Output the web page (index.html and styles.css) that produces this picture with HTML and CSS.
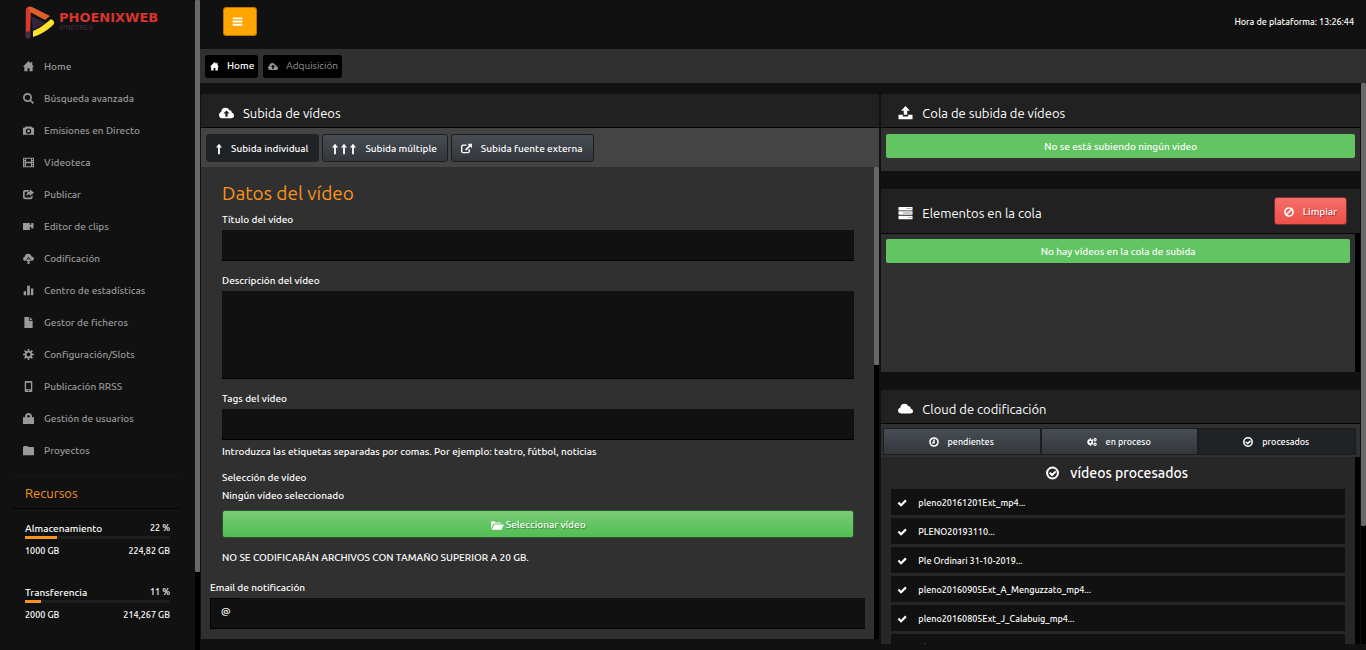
FILE: index.html
```html
<!DOCTYPE html>
<html lang="es">
<head>
<meta charset="utf-8">
<title>PhoenixWeb - Adquisición</title>
<link rel="stylesheet" href="styles.css">
</head>
<body>
<svg class="sprite" aria-hidden="true">
  <symbol id="home" viewBox="0 0 16 16"><path d="M8 0 0 8.500h2V15h4.500v-4.500h3V15H14V8.500h2l-2.500-2.700V1.500h-2v2.200z"/></symbol>
  <symbol id="search" viewBox="0 0 16 16"><circle cx="6.500" cy="6.500" r="5.300" fill="none" stroke="currentColor" stroke-width="2.400"/><path d="m9.500 11 1.600-1.600 4.900 4.900-1.700 1.700z"/></symbol>
  <symbol id="camera" viewBox="0 0 16 16"><path fill-rule="evenodd" d="M0 4h2l2-2h8l2 2h2v10H0zM8 5a4 4 0 1 0 0 8 4 4 0 0 0 0-8zm0 2a2 2 0 1 1 0 4 2 2 0 0 1 0-4z"/></symbol>
  <symbol id="film" viewBox="0 0 16 16"><path fill-rule="evenodd" d="M0 1h16v14H0zm1.500 1.500v2h1.500v-2zm0 3.500v1.500H3V6zm0 3v1.500H3V9zm0 3v1.500H3V12zM13 2.500v2h1.500v-2zM13 6v1.500h1.500V6zm0 3v1.500h1.500V9zm0 3v1.500h1.500V12zM4.500 2.500V7h7V2.500zm0 6.500v4.500h7V9z"/></symbol>
  <symbol id="share" viewBox="0 0 16 16"><path d="M9 1.500H3Q0 1.500 0 4.500V12q0 3 3 3h8q3 0 3-3v-2.500L11.500 11v.5q0 1-1 1H3.500q-1 0-1-1V5q0-1 1-1h4zM10 .5 16 5.500l-6 4.700V7.500Q6.500 7.500 5 10q0-6.500 5-6.500z"/></symbol>
  <symbol id="video" viewBox="0 0 16 16"><path d="M0 3h10v3l2-1V3h3q1 3 0 8h-3V9l-2-1v5H0z"/></symbol>
  <symbol id="codify" viewBox="0 0 16 16"><path d="M3 11.500Q0 11 0 8.500 0 6 2.500 5.500 3 1 7.500 1q4 0 5 4Q16 5.500 16 8.500q0 3-3.500 3L8 5.500 3.500 11.500z"/><path d="m8 7.500 3.800 4H9.500V16h-3v-4.500H4.200z"/></symbol>
  <symbol id="stats" viewBox="0 0 16 16"><path d="M1 9h3.500v6H1zM6 1h4v14H6zM11.500 5H15v10h-3.500z"/></symbol>
  <symbol id="file" viewBox="0 0 16 16"><path d="M2 0h6.500v5.500H14V16H2zM9.800 0 14 4.200H9.800z"/></symbol>
  <symbol id="cog" viewBox="0 0 16 16"><circle cx="8" cy="8" r="4.200" fill="none" stroke="currentColor" stroke-width="2.800"/><path d="M6.800 0h2.400v3H6.800zM6.800 13h2.400v3H6.800zM0 6.800h3v2.400H0zM13 6.800h3v2.400h-3zM1.500 3.200l1.700-1.700 2.100 2.100-1.700 1.700zM10.700 12.400l1.700-1.700 2.100 2.100-1.700 1.700zM12.800 1.500l1.700 1.700-2.100 2.100-1.700-1.700zM3.600 10.700l1.700 1.700-2.100 2.100-1.700-1.700z"/></symbol>
  <symbol id="phone" viewBox="0 0 16 16"><path fill-rule="evenodd" d="M4 0h8q1.500 0 1.500 1.500v13Q13.500 16 12 16H4q-1.500 0-1.500-1.500v-13Q2.500 0 4 0zm.5 2.500v9.500h7V2.500zM7 13.200v1.300h2v-1.300z"/></symbol>
  <symbol id="lock" viewBox="0 0 16 16"><path fill-rule="evenodd" d="M0 6h3V4Q4 0 8 0t5 4v2h3v10H0zm6 0h4V4.500Q9.500 3 8 3T6 4.500z"/></symbol>
  <symbol id="folder" viewBox="0 0 16 16"><path d="M0 3 1.500 1.500h5L8 3h8v12H0z"/></symbol>
  <symbol id="cloudup" viewBox="0 0 20 16"><path fill-rule="evenodd" d="M5 15q-5 0-5-4.500Q0 7.500 3 6.300 3.500 1 8.500 1q4 0 5.300 3.300Q17 4 17 7.300q3 .8 3 4Q20 15 16 15zM10 4.500 5.800 8.800h2.700V13h3V8.800h2.700z"/></symbol>
  <symbol id="cloud" viewBox="0 0 20 16"><path d="M5 14q-5 0-5-4Q0 7 3 6.300 3.500 1 8.500 1q4 0 5.300 3.300Q17 4 17 7.300q3 .8 3 3.700 0 3-4 3z"/></symbol>
  <symbol id="up" viewBox="0 0 8 16"><path d="M4 1 8 6H5.200v9H2.800V6H0z"/></symbol>
  <symbol id="external" viewBox="0 0 16 16"><path d="M8 2H3Q0 2 0 5v7q0 3 3 3h7q3 0 3-3V9h-2v3q0 1-1 1H3q-1 0-1-1V5q0-1 1-1h5zM9.500 1H16v6.500l-2.300-2.300-6.200 6-1.700-1.700 6-6.200z"/></symbol>
  <symbol id="upload" viewBox="0 0 16 16"><path d="m8 0 5 5.500h-3V10H6V5.500H3zM0 10h5v2h6v-2h5v5H0z"/></symbol>
  <symbol id="tasks" viewBox="0 0 16 16"><path d="M0 1h16v4H0zm0 5h16v4H0zm0 5h16v4H0z"/><path d="M9 2.500h6v1H9zM5 7.500h10v1H5zM11 12.500h4v1h-4z" fill="#999"/></symbol>
  <symbol id="ban" viewBox="0 0 16 16"><path d="m4 12 8-8M8 1.500a6.500 6.500 0 1 1 0 13 6.500 6.500 0 0 1 0-13z" fill="none" stroke="currentColor" stroke-width="2.600"/></symbol>
  <symbol id="clock" viewBox="0 0 16 16"><path d="M8 4v5H5M8 1.500a6.500 6.500 0 1 1 0 13 6.500 6.500 0 0 1 0-13z" fill="none" stroke="currentColor" stroke-width="2.400"/></symbol>
  <symbol id="okcircle" viewBox="0 0 16 16"><path d="m4.500 7.500 3 3L12 6M8 1.300a6.700 6.700 0 1 1 0 13.400A6.700 6.700 0 0 1 8 1.300z" fill="none" stroke="currentColor" stroke-width="2.500"/></symbol>
  <symbol id="cogs" viewBox="0 0 18 16"><circle cx="6" cy="8" r="3.600" fill="none" stroke="currentColor" stroke-width="3"/><path d="M5 1h2v3H5zM5 12h2v3H5zM-1 7h3v2h-3zM1 4.500 2.500 3l2 2L3 6.500zM2.500 13 1 11.500l2-2L4.500 11zM9.500 13 11 11.500l-2-2L7.500 11zM11 4.500 9.500 3l-2 2L9 6.500z"/><circle cx="14.500" cy="4" r="2" fill="none" stroke="currentColor" stroke-width="2"/><circle cx="14.500" cy="12" r="2" fill="none" stroke="currentColor" stroke-width="2"/></symbol>
  <symbol id="check" viewBox="0 0 16 16"><path d="m1 8.500 2.500-2.500L6.500 9 13 2.500 15.500 5l-9 9z"/></symbol>
  <symbol id="open" viewBox="0 0 20 16"><path d="M0 13V3q0-1.500 1.500-1.500h4L7 3.500h7.500Q16 3.500 16 5H5.500Q4 5 3.200 6.500zM5 6.500h15l-4 8H1z"/></symbol>
  <symbol id="bars" viewBox="0 0 16 16"><path d="M1 2h14v2.600H1zM1 6.700h14v2.600H1zM1 11.400h14V14H1z"/></symbol>
</svg>
<div class="app">
  <aside class="sidebar">
    <div class="sidebar-body">
      <a class="logo" href="#" aria-label="PhoenixWeb">
        <svg class="logo-mark" viewBox="0 0 30 33">
          <path d="M6 10 21 17 8 24z" fill="#33243b"/>
          <path d="M3 4v26" stroke="#4a2c49" stroke-width="5" stroke-linecap="round"/>
          <path d="M1 4Q1 1 4 1L6 3 5 25 1 26z" fill="#d9382b"/>
          <path d="M3 1q2-1 4 0l18 9-5 4L5 6z" fill="#dd5f2b"/>
          <path d="M26 13q6 3 1 7Q18 28 8 31V25q8-3 18-12z" fill="#fbe32d"/>
        </svg>
        <span class="logo-words"><span class="logo-name">PHOENIXWEB</span><span class="logo-sub">IPNETRES</span></span>
      </a>
      <nav class="nav">
        <a href="#"><svg><use href="#home"/></svg>Home</a>
        <a href="#"><svg><use href="#search"/></svg>Búsqueda avanzada</a>
        <a href="#"><svg><use href="#camera"/></svg>Emisiones en Directo</a>
        <a href="#"><svg><use href="#film"/></svg>Videoteca</a>
        <a href="#"><svg><use href="#share"/></svg>Publicar</a>
        <a href="#"><svg><use href="#video"/></svg>Editor de clips</a>
        <a href="#"><svg><use href="#codify"/></svg>Codificación</a>
        <a href="#"><svg><use href="#stats"/></svg>Centro de estadísticas</a>
        <a href="#"><svg><use href="#file"/></svg>Gestor de ficheros</a>
        <a href="#"><svg><use href="#cog"/></svg>Configuración/Slots</a>
        <a href="#"><svg><use href="#phone"/></svg>Publicación RRSS</a>
        <a href="#"><svg><use href="#lock"/></svg>Gestión de usuarios</a>
        <a href="#"><svg><use href="#folder"/></svg>Proyectos</a>
      </nav>
      <section class="resources">
        <h2>Recursos</h2>
        <div class="meter">
          <div class="meter-row"><span class="meter-name">Almacenamiento</span><span>22 %</span></div>
          <div class="meter-bar"><div style="width:22%"></div></div>
          <div class="meter-row"><span>1000 GB</span><span>224,82 GB</span></div>
        </div>
        <div class="meter">
          <div class="meter-row"><span class="meter-name">Transferencia</span><span>11 %</span></div>
          <div class="meter-bar"><div style="width:11%"></div></div>
          <div class="meter-row"><span>2000 GB</span><span>214,267 GB</span></div>
        </div>
      </section>
    </div>
    <div class="scroll"><div class="thumb thumb-side"></div></div>
  </aside>

  <div class="main">
    <header class="topbar">
      <button class="menu" type="button" aria-label="Menú"><svg><use href="#bars"/></svg></button>
      <span>Hora de plataforma: 13:26:44</span>
    </header>
    <nav class="crumbs">
      <a class="current" href="#"><svg><use href="#home"/></svg>Home</a>
      <a href="#"><svg><use href="#cloudup"/></svg>Adquisición</a>
    </nav>
    <div class="stage">
      <div class="columns">
        <section class="panel upload">
          <h2 class="panel-head"><svg><use href="#cloudup"/></svg>Subida de vídeos</h2>
          <div class="modes">
            <button class="btn active" type="button"><svg class="arrow"><use href="#up"/></svg>Subida individual</button>
            <button class="btn" type="button"><span class="arrows"><svg class="arrow"><use href="#up"/></svg><svg class="arrow"><use href="#up"/></svg><svg class="arrow"><use href="#up"/></svg></span>Subida múltiple</button>
            <button class="btn" type="button"><svg><use href="#external"/></svg>Subida fuente externa</button>
          </div>
          <div class="scroller">
            <form class="form">
              <div class="fields">
                <h3>Datos del vídeo</h3>
                <label for="titulo">Título del vídeo</label>
                <input class="box" id="titulo" type="text">
                <label class="spaced" for="descripcion">Descripción del vídeo</label>
                <textarea class="box" id="descripcion"></textarea>
                <label class="spaced" for="tags">Tags del vídeo</label>
                <input class="box" id="tags" type="text">
                <p>Introduzca las etiquetas separadas por comas. Por ejemplo: teatro, fútbol, noticias</p>
                <p class="pick">Selección de vídeo</p>
                <p class="none">Ningún vídeo seleccionado</p>
                <button class="select" type="button"><svg><use href="#open"/></svg>Seleccionar vídeo</button>
                <p class="limit">NO SE CODIFICARÁN ARCHIVOS CON TAMAÑO SUPERIOR A 20 GB.</p>
              </div>
              <label for="email">Email de notificación</label>
              <div class="mail"><span>@</span><input class="box" id="email" type="email"></div>
            </form>
            <div class="scroll"><div class="thumb thumb-form"></div></div>
          </div>
        </section>

        <div class="right">
          <section class="panel">
            <h2 class="panel-head"><svg><use href="#upload"/></svg>Cola de subida de vídeos</h2>
            <div class="queue"><p class="alert">No se está subiendo ningún video</p></div>
          </section>
          <section class="panel">
            <div class="panel-head tall"><h2><svg><use href="#tasks"/></svg>Elementos en la cola</h2>
              <button class="clear" type="button"><svg><use href="#ban"/></svg>Limpiar</button></div>
            <div class="scroller items"><div class="queue"><p class="alert">No hay vídeos en la cola de subida</p></div><div class="scroll"></div></div>
          </section>
          <section class="panel coding">
            <h2 class="panel-head"><svg><use href="#cloud"/></svg>Cloud de codificación</h2>
            <div class="tabs">
              <button type="button"><svg><use href="#clock"/></svg>pendientes</button>
              <button type="button"><svg><use href="#cogs"/></svg>en proceso</button>
              <button class="active" type="button"><svg><use href="#okcircle"/></svg>procesados</button>
            </div>
            <div class="scroller">
              <div class="done">
                <h3><svg><use href="#okcircle"/></svg>vídeos procesados</h3>
                <ul>
                  <li><svg><use href="#check"/></svg>pleno20161201Ext_mp4...</li>
                  <li><svg><use href="#check"/></svg>PLENO20193110...</li>
                  <li><svg><use href="#check"/></svg>Ple Ordinari 31-10-2019...</li>
                  <li><svg><use href="#check"/></svg>pleno20160905Ext_A_Menguzzato_mp4...</li>
                  <li><svg><use href="#check"/></svg>pleno20160805Ext_J_Calabuig_mp4...</li>
                  <li><svg><use href="#check"/></svg>pleno20160729Ext_mp4...</li>
                </ul>
              </div>
              <div class="scroll"></div>
            </div>
          </section>
        </div>
      </div>
      <div class="scroll"><div class="thumb thumb-page"></div></div>
    </div>
  </div>
</div>
</body>
</html>
```
FILE: styles.css
```css
* { box-sizing: border-box; }
body {
  margin: 0;
  background: #111;
  color: #fff;
  font: 500 10px/16px Ubuntu, "Noto Sans", sans-serif;
}
h2, h3, p, ul { margin: 0; padding: 0; }
h2, h3 { font-weight: 400; }
a { color: inherit; text-decoration: none; }
button { font: inherit; color: #fff; cursor: pointer; }
svg { width: 11px; height: 11px; fill: currentColor; flex: none; }
.sprite { position: absolute; width: 0; height: 0; }

.app { display: flex; height: 100vh; overflow: hidden; }
.scroll { flex: none; width: 5px; background: #000; }
.thumb { background: #686868; border-radius: 1px; }
.thumb-side { height: 88%; }
.thumb-form { height: 42%; }
.thumb-page { height: 79%; }

.sidebar { display: flex; flex: none; width: 200px; }
.sidebar-body { flex: 1; padding: 6px 14px 0 12px; overflow: hidden; }
.logo { display: flex; gap: 4px; height: 45px; padding-left: 13px; }
.logo-mark { width: 30px; height: 33px; }
.logo-words { display: flex; flex-direction: column; padding-top: 5px; font-family: "DejaVu Sans", sans-serif; }
.logo-name { color: #d8352c; font-size: 13px; line-height: 14px; font-weight: 700; }
.logo-sub { color: #3d2c40; font-size: 7px; line-height: 7px; font-weight: 400; }
.nav a { display: flex; align-items: center; gap: 10px; height: 32px; padding-left: 11px; color: #999; }
.nav svg { margin-bottom: 2px; }
.resources { margin-top: 8px; border-top: 1px solid #161616; }
.resources h2 {
  height: 33px;
  padding: 7px 13px 0;
  border-bottom: 1px solid #060606;
  color: #f7941d;
  font-size: 13px;
  line-height: 20px;
}
.meter { height: 64px; padding: 12px 11px 0 13px; font-size: 9px; }
.meter-row { display: flex; justify-content: space-between; line-height: 15px; }
.meter-name { font-size: 10px; }
.meter-bar { height: 3px; margin-bottom: 5px; background: #1b1e21; }
.meter-bar div { height: 3px; background: #f7941d; }

.main { display: flex; flex: 1; flex-direction: column; min-width: 0; }
.topbar { display: flex; flex: none; align-items: center; justify-content: space-between; height: 49px; padding: 0 12px 6px 23px; font-size: 9px; }
.menu { display: grid; place-items: center; width: 34px; height: 29px; padding: 0 5px 0 0; border: 1px solid #b87800; border-radius: 3px; background: #ffa500; }
.crumbs { display: flex; flex: none; align-items: center; gap: 5px; height: 34px; padding-left: 5px; background: #303030; }
.crumbs a { display: flex; align-items: center; gap: 8px; height: 23px; padding: 0 4px 0 5px; border-radius: 3px; background: #000; color: #999; font-weight: 400; }
.crumbs svg { width: 10px; height: 9px; }
.crumbs a.current { color: #fff; font-weight: 500; }
.crumbs .current svg { width: 9px; }
.stage { display: flex; flex: 1; min-height: 0; padding-bottom: 6px; }
.columns { display: flex; flex: 1; gap: 2px; min-width: 0; padding: 11px 1px 0; }
.upload { display: flex; flex: 1; flex-direction: column; min-width: 0; margin-bottom: 5px; }
.right { display: flex; flex: none; flex-direction: column; gap: 18px; width: 41.300%; min-height: 0; }

.panel-head {
  display: flex;
  flex: none;
  align-items: center;
  height: 34px;
  padding: 4px 13px 0 18px;
  border-bottom: 1px solid #050505;
  background: #212121;
  font-size: 13px;
}
.panel-head svg { width: 15px; height: 14px; margin-right: 9px; }
.right .panel-head { padding-left: 17px; }
.panel-head.tall { justify-content: space-between; height: 45px; padding-top: 0; }
.tall h2 { display: flex; align-items: center; font-size: 13px; padding-top: 3px; }
.clear { display: flex; align-items: center; height: 28px; padding: 1px 9px 0; border: 1px solid #7c2c2c; border-radius: 3px; background: linear-gradient(#f27069, #ee5049); font-size: 10px; text-shadow: 1px 1px 1px #a33; }
.panel-head .clear svg { width: 10px; height: 10px; margin-right: 9px; }

.modes { display: flex; flex: none; align-items: center; gap: 3px; height: 39px; padding-left: 5px; background: #444; }
.btn { display: flex; align-items: center; gap: 9px; height: 28px; padding: 2px 10px 0 9px; border: 1px solid #1b1d1f; border-radius: 3px; background: linear-gradient(#484d55, #33373b); }
.btn.active { border-color: #202326; background: #202326; }
.btn .arrow { width: 6px; height: 12px; }
.arrows { display: flex; gap: 3px; }
.scroller { display: flex; flex: 1; min-height: 0; overflow: hidden; }
.form { flex: 1; min-width: 0; padding: 13px 9px 0; background: #303030; }
.fields { padding: 0 11px 0 12px; }
.form h3 { color: #f7941d; font-size: 19px; line-height: 26px; }
.form label { display: block; padding: 6px 0 2px; line-height: 16px; }
.form .spaced { padding-top: 12px; }
.box { display: block; width: 100%; height: 31px; margin: 0; padding: 4px 8px; border: 0; border-bottom: 1px solid #000; background: #111; color: #fff; font: inherit; resize: none; outline: 0; }
textarea.box { height: 88px; }
.form p { padding-top: 4px; }
.form .pick { padding-top: 10px; }
.form .none { padding-top: 2px; }
.select { display: flex; align-items: center; justify-content: center; gap: 2px; width: 100%; height: 28px; margin-top: 6px; padding: 2px 0 0; border: 1px solid #28562a; border-radius: 3px; background: linear-gradient(#78cb76, #52bd53); text-shadow: 1px 1px 1px #3a8a3b; }
.select svg { width: 13px; }
.form .limit { padding: 12px 0 8px; }
.mail { display: flex; background: #111; }
.mail span { padding: 5px 0 5px 10px; width: 31px; border: 1px solid #000; border-right: 0; line-height: 16px; }

.queue { flex: 1; height: 43px; padding: 6px 5px; background: #303030; }
.alert { height: 24px; border-radius: 2px; background: #62c462; line-height: 25px; text-align: center; }
.items { height: 138px; }
.items .queue { height: auto; padding-top: 5px; }
.coding { display: flex; flex: 1; flex-direction: column; min-height: 0; }
.tabs { display: grid; flex: none; grid-template-columns: repeat(3, 1fr); height: 33px; padding: 4px 4px 2px 2px; background: #303030; }
.tabs button { display: flex; align-items: center; justify-content: center; gap: 9px; padding: 0 2px 0 0; border: 1px solid #1b1d1f; background: linear-gradient(#484d55, #33373b); font-size: 9px; }
.tabs svg { width: 10px; height: 10px; }
.tabs button.active { background: #202326; }
.done { flex: 1; padding: 0 10px; background: #272727; }
.done h3 { display: flex; align-items: center; justify-content: center; gap: 11px; height: 32px; padding-right: 2px; font-size: 14px; font-weight: 500; }
.done h3 svg { width: 13px; height: 14px; }
.done ul { display: grid; gap: 3px; list-style: none; }
.done li { display: flex; align-items: center; gap: 11px; height: 26px; padding: 1px 0 0 6px; background: #111; font-size: 9px; }
.done li svg { width: 10px; height: 10px; }
```
